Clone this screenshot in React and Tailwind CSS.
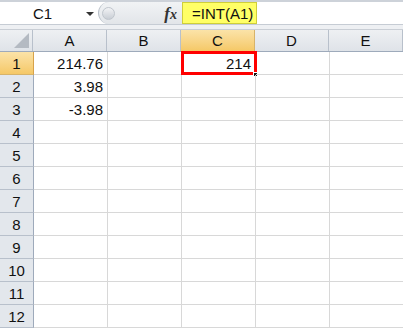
export default function App() {
  const cols = ["A", "B", "C", "D", "E"];
  const data = { 1: { A: "214.76", C: "214" }, 2: { A: "3.98" }, 3: { A: "-3.98" } };
  const rows = Array.from({ length: 12 }, (_, i) => i + 1);
  return (
    <div className="w-[403px] h-[329px] overflow-hidden bg-white font-['Liberation_Sans',Arial,sans-serif] text-[15px] text-[#111]">
      {/* formula bar */}
      <div className="h-[30px] bg-[#e3e7ec] border-t-2 border-[#cdd2d9] flex flex-col">
        <div className="h-[23px] flex border-b border-[#c6ccd4] bg-white">
          <div className="w-[98px] flex items-center relative">
            <span className="ml-[33px] leading-none">C1</span>
            <span className="absolute left-[86px] top-[10px] w-0 h-0 border-l-[4px] border-r-[4px] border-t-[4px] border-l-transparent border-r-transparent border-t-[#333]"></span>
          </div>
          <div className="w-[84px] flex items-center bg-gradient-to-b from-[#f1f3f5] to-[#e2e5e9] rounded-l-[12px] border-l border-[#b9c0c9] relative">
            <span className="ml-[3px] w-[13px] h-[13px] rounded-full bg-gradient-to-b from-[#f2f3f5] to-[#c9ced5] border border-[#bfc5cc]"></span>
            <span className="ml-auto mr-[5px] font-['Liberation_Serif',serif] italic font-bold text-[17px] leading-none text-[#333]">
              f<span className="text-[14px]">x</span>
            </span>
          </div>
          <div className="w-[75px] bg-[#ffff66] border border-[#cfcf3a] flex items-center">
            <span className="ml-[9px] leading-none">=INT(A1)</span>
          </div>
          <div className="flex-1 bg-white"></div>
        </div>
        <div className="flex-1 bg-[#eef0f3] border-b border-[#c9ced5]"></div>
      </div>
      {/* header row */}
      <div className="flex h-[22px] bg-gradient-to-b from-[#eef0f3] to-[#dfe3e8] border-b border-[#9eaabb]">
        <div className="w-[34px] border-r border-[#b8c0cb] relative">
          <span className="absolute right-[3px] bottom-[3px] w-0 h-0 border-b-[15px] border-l-[15px] border-b-[#b4bac2] border-l-transparent"></span>
        </div>
        {cols.map((c) => (
          <div
            key={c}
            className={
              "w-[74px] shrink-0 flex items-center justify-center border-r leading-none " +
              (c === "C"
                ? "bg-gradient-to-b from-[#fbe3a8] to-[#f5c866] border-[#d7b36a]"
                : "border-[#b8c0cb]")
            }
          >
            {c}
          </div>
        ))}
      </div>
      {/* rows */}
      {rows.map((r) => (
        <div key={r} className="flex h-[23px]">
          <div
            className={
              "w-[34px] shrink-0 flex items-center justify-center border-r border-b leading-none " +
              (r === 1
                ? "bg-gradient-to-b from-[#fbe3a8] to-[#f5c866] border-r-[#d7a24a] border-b-[#d7b36a]"
                : "bg-[#e3e7ec] border-r-[#9eaabb] border-b-[#b8c0cb]")
            }
          >
            {r}
          </div>
          {cols.map((c) => {
            const v = data[r] && data[r][c];
            const sel = r === 1 && c === "C";
            return (
              <div
                key={c}
                className="w-[74px] shrink-0 border-r border-b border-[#d8d8d8] flex items-center justify-end pr-[4px] leading-none relative"
              >
                {v}
                {sel && (
                  <>
                    <span className="absolute -left-[1px] -top-[1px] w-[76px] h-[24px] border-[3px] border-[#ff0000]"></span>
                    <span className="absolute -right-[3px] -bottom-[3px] w-[5px] h-[5px] bg-[#111] border border-white"></span>
                  </>
                )}
              </div>
            );
          })}
        </div>
      ))}
    </div>
  );
}
